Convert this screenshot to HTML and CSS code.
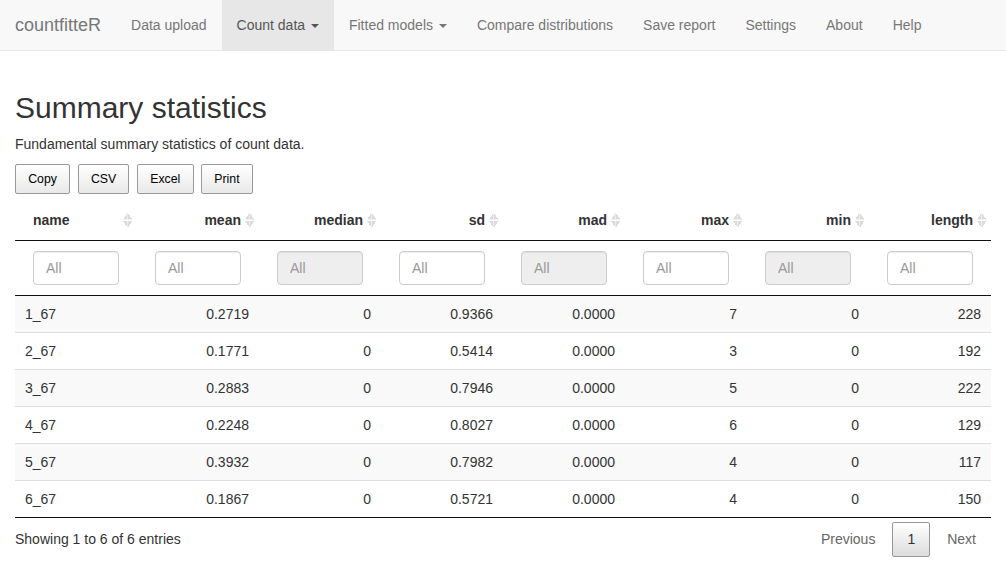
FILE: index.html
```html
<!DOCTYPE html>
<html>
<head>
<meta charset="utf-8">
<link rel="stylesheet" href="styles.css">
</head>
<body>
<nav class="navbar">
  <span class="brand">countfitteR</span>
  <ul class="nav">
    <li><a>Data upload</a></li>
    <li class="active"><a>Count data <span class="caret"></span></a></li>
    <li><a>Fitted models <span class="caret"></span></a></li>
    <li><a>Compare distributions</a></li>
    <li><a>Save report</a></li>
    <li><a>Settings</a></li>
    <li><a>About</a></li>
    <li><a>Help</a></li>
  </ul>
</nav>
<main class="container">
  <h2 class="title">Summary statistics</h2>
  <p class="lead-text">Fundamental summary statistics of count data.</p>
  <div class="dt-buttons">
    <button class="dt-button">Copy</button>
    <button class="dt-button">CSV</button>
    <button class="dt-button">Excel</button>
    <button class="dt-button">Print</button>
  </div>
  <table class="dt">
    <thead>
      <tr class="head-row">
        <th class="left sort">name</th>
        <th class="right sort">mean</th>
        <th class="right sort">median</th>
        <th class="right sort">sd</th>
        <th class="right sort">mad</th>
        <th class="right sort">max</th>
        <th class="right sort">min</th>
        <th class="right sort">length</th>
      </tr>
      <tr class="filter-row">
        <td><input class="filter" placeholder="All"></td>
        <td><input class="filter" placeholder="All"></td>
        <td><input class="filter" placeholder="All" disabled></td>
        <td><input class="filter" placeholder="All"></td>
        <td><input class="filter" placeholder="All" disabled></td>
        <td><input class="filter" placeholder="All"></td>
        <td><input class="filter" placeholder="All" disabled></td>
        <td><input class="filter" placeholder="All"></td>
      </tr>
    </thead>
    <tbody>
      <tr><td class="left">1_67</td><td>0.2719</td><td>0</td><td>0.9366</td><td>0.0000</td><td>7</td><td>0</td><td>228</td></tr>
      <tr><td class="left">2_67</td><td>0.1771</td><td>0</td><td>0.5414</td><td>0.0000</td><td>3</td><td>0</td><td>192</td></tr>
      <tr><td class="left">3_67</td><td>0.2883</td><td>0</td><td>0.7946</td><td>0.0000</td><td>5</td><td>0</td><td>222</td></tr>
      <tr><td class="left">4_67</td><td>0.2248</td><td>0</td><td>0.8027</td><td>0.0000</td><td>6</td><td>0</td><td>129</td></tr>
      <tr><td class="left">5_67</td><td>0.3932</td><td>0</td><td>0.7982</td><td>0.0000</td><td>4</td><td>0</td><td>117</td></tr>
      <tr><td class="left">6_67</td><td>0.1867</td><td>0</td><td>0.5721</td><td>0.0000</td><td>4</td><td>0</td><td>150</td></tr>
    </tbody>
  </table>
  <div class="dt-footer">
    <div class="info">Showing 1 to 6 of 6 entries</div>
    <div class="paging">
      <a class="page disabled">Previous</a>
      <a class="page current">1</a>
      <a class="page disabled">Next</a>
    </div>
  </div>
</main>
</body>
</html>
```
FILE: styles.css
```css
* { box-sizing: border-box; }
html, body { margin: 0; padding: 0; }
body {
  font-family: "Liberation Sans", Arial, Helvetica, sans-serif;
  font-size: 14px;
  line-height: 20px;
  color: #333;
  background: #fff;
}
.navbar {
  display: flex;
  height: 51px;
  background: #f8f8f8;
  border-bottom: 1px solid #e7e7e7;
  margin-bottom: 20px;
}
.brand {
  padding: 15px;
  font-size: 18px;
  line-height: 20px;
  height: 50px;
  color: #777;
}
.nav {
  display: flex;
  list-style: none;
  margin: 0;
  padding: 0;
}
.nav a {
  display: block;
  padding: 15px;
  line-height: 20px;
  height: 50px;
  color: #777;
}
.nav .active a {
  background: #e7e7e7;
  color: #555;
}
.caret {
  display: inline-block;
  width: 0;
  height: 0;
  margin-left: 2px;
  vertical-align: middle;
  border-top: 4px solid;
  border-left: 4px solid transparent;
  border-right: 4px solid transparent;
}
.container {
  display: flow-root;
  padding: 0 15px;
}
.title {
  margin: 20px 0 10px;
  font-size: 30px;
  font-weight: 500;
  line-height: 33px;
}
.lead-text {
  margin: 0 0 10px;
}
.dt-buttons {
  display: flex;
  gap: 7.6px;
  margin-bottom: 6px;
}
.dt-button {
  font-family: inherit;
  font-size: 12.32px;
  line-height: 16px;
  height: 30px;
  padding: 6px 12.2px;
  color: #000;
  border: 1px solid #999;
  border-radius: 2px;
  background: linear-gradient(to bottom, #fff 0%, #e9e9e9 100%);
}
.dt {
  width: 976px;
  table-layout: fixed;
  border-collapse: separate;
  border-spacing: 0;
  border-bottom: 1px solid #111;
}
.dt th {
  position: relative;
  padding: 10px 18px;
  height: 41px;
  font-weight: bold;
  border-bottom: 1px solid #111;
}
.dt th.left { text-align: left; }
.dt th.right { text-align: right; }
.dt th.sort::after {
  content: "";
  position: absolute;
  right: 5px;
  top: 12px;
  width: 9px;
  height: 16px;
  background:
    linear-gradient(to bottom right, transparent 50%, #dcdcdc 50%) 0 1px / 4.5px 6.5px no-repeat,
    linear-gradient(to bottom left, transparent 50%, #dcdcdc 50%) 4.5px 1px / 4.5px 6.5px no-repeat,
    linear-gradient(to top right, transparent 50%, #dcdcdc 50%) 0 8.5px / 4.5px 6.5px no-repeat,
    linear-gradient(to top left, transparent 50%, #dcdcdc 50%) 4.5px 8.5px / 4.5px 6.5px no-repeat;
}
.filter-row td {
  padding: 10px 18px;
  border-bottom: 1px solid #111;
}
.filter {
  display: block;
  width: 100%;
  height: 34px;
  padding: 6px 12px;
  font-family: inherit;
  font-size: 14px;
  color: #555;
  background: #fff;
  border: 1px solid #ccc;
  border-radius: 4px;
  box-shadow: inset 0 1px 1px rgba(0,0,0,.075);
}
.filter::placeholder { color: #999; }
.filter:disabled { background: #eee; }
.dt tbody td {
  padding: 8px 10px;
  height: 36px;
  text-align: right;
  border-top: 1px solid #ddd;
}
.dt tbody tr:first-child td { border-top: none; }
.dt tbody td.left { text-align: left; }
.dt tbody tr:nth-child(odd) { background: #f9f9f9; }
.dt-footer {
  display: flex;
  justify-content: space-between;
  align-items: flex-start;
  width: 976px;
}
.info {
  padding-top: 11px;
}
.paging {
  display: flex;
  padding-top: 4px;
  gap: 2px;
}
.page {
  display: block;
  padding: 8px 14px;
  line-height: 17px;
  border: 1px solid transparent;
  border-radius: 2px;
  color: #666;
}
.page.current {
  color: #333;
  border-color: #979797;
  background: linear-gradient(to bottom, #fff 0%, #dcdcdc 100%);
}
```
